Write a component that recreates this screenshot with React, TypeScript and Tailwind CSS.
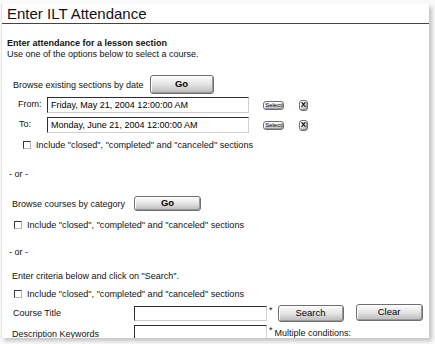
import React from 'react';

const Btn: React.FC<{ className?: string; children: React.ReactNode }> = ({ className = '', children }) => (
  <div
    className={`flex items-center justify-center rounded-[3px] border border-[#6f6f6f] bg-linear-to-b from-[#fdfdfd] via-[#e4e4e4] to-[#b9b9b9] shadow-[inset_1px_1px_0_#ffffff,inset_-1px_-1px_0_#9a9a9a] text-black ${className}`}
  >
    {children}
  </div>
);

const Field: React.FC<{ className?: string; value?: string }> = ({ className = '', value }) => (
  <div
    className={`border border-t-[#2e2e2e] border-l-[#2e2e2e] border-r-[#d0d0d0] border-b-[#d0d0d0] bg-white pl-[3px] text-[9px] leading-[14px] text-black ${className}`}
  >
    {value}
  </div>
);

const Check: React.FC<{ className?: string }> = ({ className = '' }) => (
  <div className={`flex h-[10px] items-center ${className}`}>
    <span className="mr-[5px] h-[8px] w-[8px] border border-t-[#3a3a3a] border-l-[#3a3a3a] border-r-[#b5b5b5] border-b-[#b5b5b5] bg-white" />
    <span className="text-[9.1px] leading-[10px]">Include "closed", "completed" and "canceled" sections</span>
  </div>
);

export default function App() {
  return (
    <div className="h-[344px] w-[435px] overflow-hidden bg-[#fafafa] pt-[4px] pl-[1px] font-['Liberation_Sans',Arial,sans-serif] text-[9px] text-[#111]">
      <div className="h-[334px] w-[428px] overflow-hidden border-l border-[#e2e2e2] bg-white shadow-[3px_3px_4px_rgba(0,0,0,0.22)]">
        <div className="h-[20px] border-b border-[#444] pl-[5px] text-[15px] leading-[19px]">Enter ILT Attendance</div>

        <div className="mt-[14px] pl-[5px] leading-[11px]">
          <div className="font-bold">Enter attendance for a lesson section</div>
          <div>Use one of the options below to select a course.</div>
        </div>

        <div className="mt-[15px] flex h-[19px] items-center pl-[11px]">
          <span className="mt-[3px]">Browse existing sections by date</span>
          <Btn className="ml-[6px] h-[19px] w-[64px] text-[9.5px] font-bold">Go</Btn>
        </div>

        <div className="mt-[3px] flex h-[16px] items-center">
          <span className="w-[45px] pl-[16px]">From:</span>
          <Field className="h-[16px] w-[202px]" value="Friday, May 21, 2004 12:00:00 AM" />
          <Btn className="ml-[14px] h-[9px] w-[21px] rounded-[2px] text-[6px] leading-[6px]">Select</Btn>
          <Btn className="ml-[15px] h-[11px] w-[9px] rounded-[1px] text-[8px] font-bold">X</Btn>
        </div>

        <div className="mt-[4px] flex h-[16px] items-center">
          <span className="w-[45px] pl-[17px]">To:</span>
          <Field className="h-[16px] w-[202px]" value="Monday, June 21, 2004 12:00:00 AM" />
          <Btn className="ml-[14px] h-[9px] w-[21px] rounded-[2px] text-[6px] leading-[6px]">Select</Btn>
          <Btn className="ml-[15px] h-[11px] w-[9px] rounded-[1px] text-[8px] font-bold">X</Btn>
        </div>

        <Check className="mt-[7px] pl-[21px]" />

        <div className="mt-[19px] h-[10px] pl-[7px] leading-[10px]">- or -</div>

        <div className="mt-[17px] flex h-[15px] items-center pl-[10px]">
          <span className="mt-[3px]">Browse courses by category</span>
          <Btn className="ml-[9px] h-[15px] w-[67px] text-[9.5px] font-bold">Go</Btn>
        </div>

        <Check className="mt-[9px] pl-[12px]" />

        <div className="mt-[17px] h-[10px] pl-[7px] leading-[10px]">- or -</div>

        <div className="mt-[14px] h-[10px] pl-[10px] leading-[10px]">Enter criteria below and click on "Search".</div>

        <Check className="mt-[8px] pl-[12px]" />

        <div className="mt-[6px] flex h-[17px] items-center">
          <span className="w-[132px] pl-[11px]">Course Title</span>
          <Field className="h-[15px] w-[133px]" />
          <span className="ml-[2px] self-start text-[9px] leading-[10px]">*</span>
          <Btn className="ml-[5px] h-[17px] w-[66px] text-[9.5px]">Search</Btn>
          <Btn className="-mt-[3px] ml-[12px] h-[17px] w-[67px] text-[9.5px]">Clear</Btn>
        </div>

        <div className="mt-[3px] flex items-start">
          <span className="mt-[3px] w-[132px] pl-[10px]">Description Keywords</span>
          <Field className="h-[15px] w-[133px]" />
          <span className="ml-[2px] text-[9px] leading-[10px]">*</span>
          <span className="ml-[2px] mt-[3px] leading-[10px]">Multiple conditions:</span>
        </div>
      </div>
    </div>
  );
}
